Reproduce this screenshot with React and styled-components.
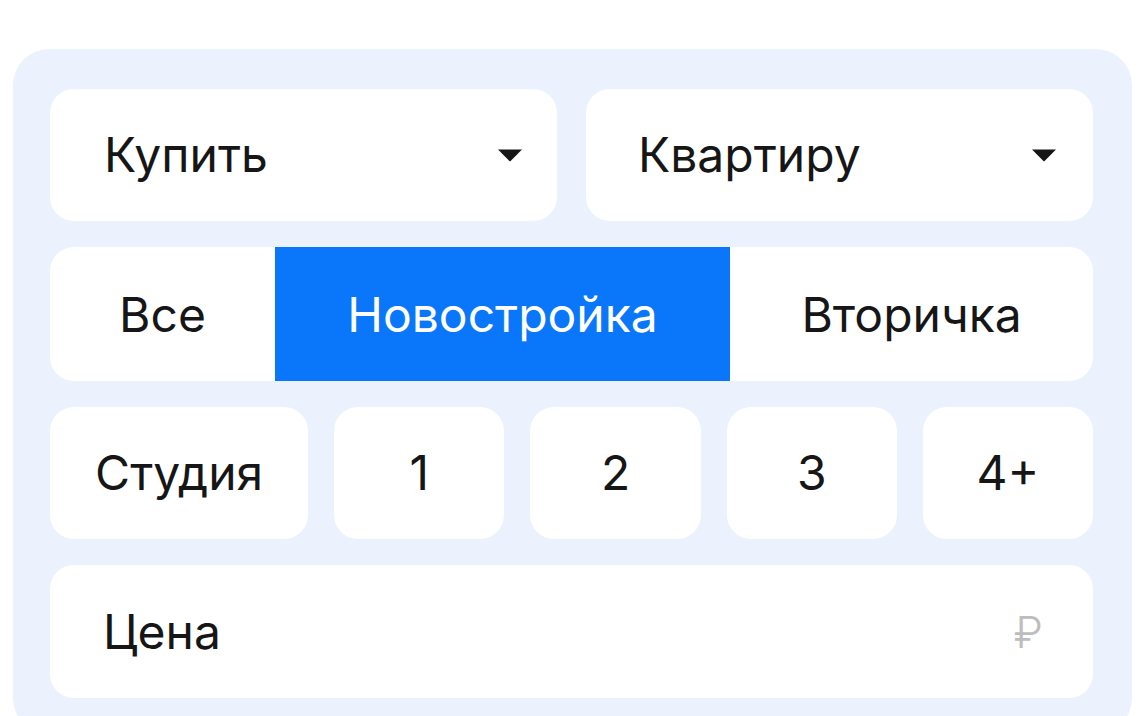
import React from "react";
import styled, { createGlobalStyle } from "styled-components";

const Global = createGlobalStyle`
  html, body {
    margin: 0;
    padding: 0;
    background: #ffffff;
    overflow: hidden;
  }
  body {
    font-family: Inter, "Open Sans", "Noto Sans", sans-serif;
    color: #161616;
  }
`;

const Page = styled.div`
  width: 1146px;
  height: 716px;
  box-sizing: border-box;
  padding: 49px 14px 0 13px;
`;

const Panel = styled.div`
  background: #ebf2fd;
  border-radius: 36px;
  padding: 40px 39px 36px 37px;
  display: flex;
  flex-direction: column;
  gap: 26px;
`;

const Row = styled.div`
  display: grid;
  grid-template-columns: ${(p) => p.$cols};
  gap: ${(p) => p.$gap || "27px"};
  height: ${(p) => p.$h || "132px"};
`;

const Card = styled.div`
  background: #ffffff;
  border-radius: 24px;
  display: flex;
  align-items: center;
  justify-content: ${(p) => (p.$center ? "center" : "space-between")};
  padding: ${(p) => (p.$center ? "0" : p.$pad || "0 34px 0 54px")};
  font-size: 48px;
  line-height: 1;
`;

const Label = styled.span`
  display: block;
`;

const Ruble = styled.span`
  color: #bdbdbd;
  font-size: 44px;
  font-weight: 300;
`;

const Segmented = styled.div`
  background: #ffffff;
  border-radius: 24px;
  overflow: hidden;
  display: grid;
  grid-template-columns: 225fr 455fr 363fr;
  height: 134px;
`;

const Segment = styled.div`
  display: flex;
  align-items: center;
  justify-content: center;
  font-size: 48px;
  background: ${(p) => (p.$active ? "#0a77fb" : "transparent")};
  color: ${(p) => (p.$active ? "#ffffff" : "#161616")};
`;

const Caret = () => (
  <svg width="26" height="14" viewBox="0 0 26 14" aria-hidden="true">
    <path d="M1 1.5 H25 L13.6 13 Q13 13.6 12.4 13 Z" fill="#161616" />
  </svg>
);

export default function App() {
  return (
    <>
      <Global />
      <Page>
        <Panel>
          <Row $cols="1fr 1fr" $gap="29px">
            <Card>
              <Label>Купить</Label>
              <Caret />
            </Card>
            <Card $pad="0 36px 0 52px">
              <Label>Квартиру</Label>
              <Caret />
            </Card>
          </Row>
          <Segmented>
            <Segment>Все</Segment>
            <Segment $active>Новостройка</Segment>
            <Segment>Вторичка</Segment>
          </Segmented>
          <Row $cols="258fr 170fr 170fr 170fr 170fr" $gap="26px">
            <Card $center>
              <Label>Студия</Label>
            </Card>
            <Card $center>
              <Label>1</Label>
            </Card>
            <Card $center>
              <Label>2</Label>
            </Card>
            <Card $center>
              <Label>3</Label>
            </Card>
            <Card $center>
              <Label>4+</Label>
            </Card>
          </Row>
          <Row $cols="1fr" $h="133px">
            <Card $pad="0 50px 0 53px">
              <Label>Цена</Label>
              <Ruble>₽</Ruble>
            </Card>
          </Row>
        </Panel>
      </Page>
    </>
  );
}
